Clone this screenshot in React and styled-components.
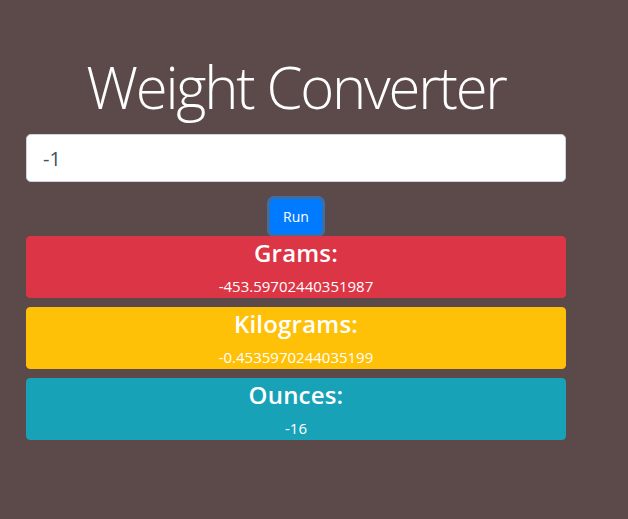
import React, { useState } from "react";
import styled, { createGlobalStyle } from "styled-components";

const Global = createGlobalStyle`
  html, body { margin: 0; padding: 0; background: #5c4a4b; }
  body { font-family: "Open Sans", "Noto Sans", sans-serif; color: #fff; }
  * { box-sizing: border-box; }
`;

const Page = styled.div`
  width: 540px;
  margin-left: 26px;
  padding-top: 50px;
  display: flex;
  flex-direction: column;
  align-items: center;
`;

const Title = styled.h1`
  margin: 0 0 10px;
  font-size: 58px;
  font-weight: 300;
  line-height: 74px;
  letter-spacing: -2.2px;
  color: #fff;
  text-align: center;
`;

const Input = styled.input`
  width: 100%;
  height: 48px;
  padding: 8px 16px;
  font-family: inherit;
  font-size: 20px;
  color: #495057;
  background: #fff;
  border: 1px solid #ced4da;
  border-radius: 4.8px;
  outline: none;
`;

const RunButton = styled.button`
  margin: 17px 0 2px;
  padding: 6px 12px;
  font-family: inherit;
  font-size: 14px;
  line-height: 1.5;
  color: #fff;
  background: #007bff;
  border: 1px solid #007bff;
  border-radius: 4px;
  box-shadow: 0 0 0 3px rgba(38, 143, 255, 0.5);
  cursor: pointer;
`;

const Results = styled.div`
  width: 100%;
  display: flex;
  flex-direction: column;
  gap: 9px;
`;

const Card = styled.div`
  width: 100%;
  height: 62px;
  padding-top: 2px;
  background: ${(p) => p.$bg};
  border: 1px solid ${(p) => p.$bg};
  border-radius: 4px;
  text-align: center;
  display: flex;
  flex-direction: column;
  align-items: center;
`;

const CardTitle = styled.h4`
  margin: 0 0 6px;
  font-size: 24px;
  font-weight: 600;
  line-height: 1.2;
  letter-spacing: 0.2px;
`;

const CardValue = styled.p`
  margin: 0;
  font-size: 15px;
  line-height: 24px;
  letter-spacing: 0;
`;

export default function App() {
  const [val, setVal] = useState("-1");
  const n = parseFloat(val) || 0;
  const rows = [
    { label: "Grams:", value: String(n * 453.59702440351987), bg: "#dc3545" },
    { label: "Kilograms:", value: String(n * 0.4535970244035199), bg: "#ffc107" },
    { label: "Ounces:", value: String(n * 16), bg: "#17a2b8" },
  ];
  return (
    <>
      <Global />
      <Page>
        <Title>Weight Converter</Title>
        <Input value={val} onChange={(e) => setVal(e.target.value)} />
        <RunButton>Run</RunButton>
        <Results>
          {rows.map((r) => (
            <Card key={r.label} $bg={r.bg}>
              <CardTitle>{r.label}</CardTitle>
              <CardValue>{r.value}</CardValue>
            </Card>
          ))}
        </Results>
      </Page>
    </>
  );
}
